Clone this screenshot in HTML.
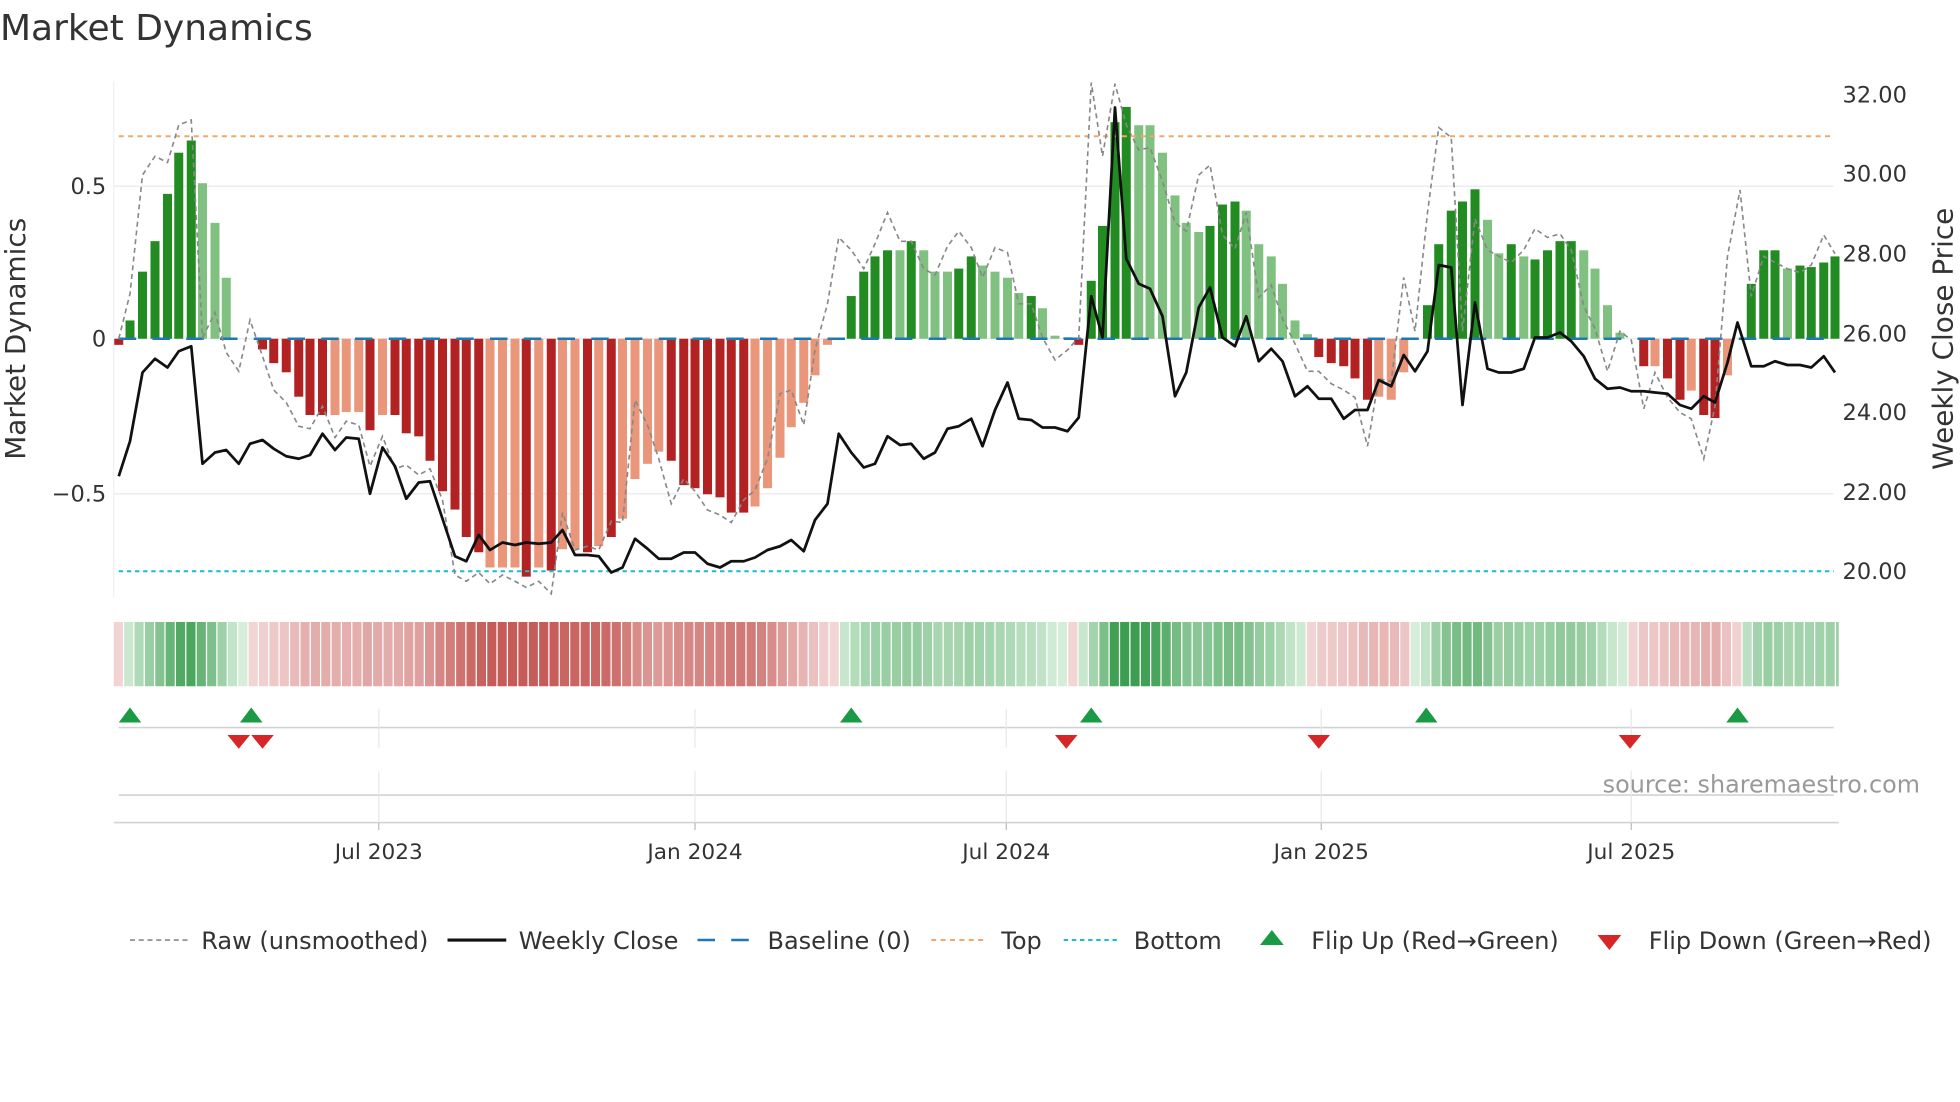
<!DOCTYPE html>
<html><head><meta charset="utf-8"><style>
html,body{margin:0;padding:0;background:#fff;}
svg{display:block;}
text{font-family:"DejaVu Sans","Liberation Sans",sans-serif;}
</style></head><body>
<svg id="s" width="1960" height="1102" viewBox="0 0 1568 881.6" xmlns="http://www.w3.org/2000/svg">
<rect width="1568" height="881.6" fill="#fff"/>
<text x="0" y="32" font-size="28.8" fill="#333">Market Dynamics</text>
<g id="g"></g>
</svg>
<script>
var NS="http://www.w3.org/2000/svg",g=document.getElementById('g');
function el(t,a,txt){var e=document.createElementNS(NS,t);for(var k in a)e.setAttribute(k,a[k]);if(txt!=null)e.textContent=txt;g.appendChild(e);return e;}
el('line',{x1:91,y1:65,x2:91,y2:478,stroke:'#eef0f4','stroke-width':1});
[149,271,395].forEach(function(y){el('line',{x1:91,y1:y,x2:1467,y2:y,stroke:'#ebedf0','stroke-width':1.2});});
var bars=[[95,-0.02,'D'],[104,0.06,'D'],[114,0.22,'D'],[124,0.32,'D'],[134,0.475,'D'],[143,0.61,'D'],[153,0.65,'D'],[162,0.51,'L'],[172,0.38,'L'],[181,0.2,'L'],[191,0,'L'],[200,0,'L'],[210,-0.035,'D'],[219,-0.08,'D'],[229,-0.11,'D'],[239,-0.19,'D'],[248,-0.25,'D'],[258,-0.25,'D'],[268,-0.25,'L'],[277,-0.24,'L'],[287,-0.24,'L'],[296,-0.30,'D'],[306,-0.25,'L'],[316,-0.25,'D'],[325,-0.31,'D'],[335,-0.32,'D'],[344,-0.40,'D'],[354,-0.50,'D'],[364,-0.56,'D'],[373,-0.65,'D'],[383,-0.70,'D'],[392,-0.75,'L'],[402,-0.75,'L'],[412,-0.75,'L'],[421,-0.78,'D'],[431,-0.75,'L'],[441,-0.76,'D'],[450,-0.69,'L'],[460,-0.69,'L'],[470,-0.70,'D'],[479,-0.68,'L'],[489,-0.65,'D'],[498,-0.59,'L'],[508,-0.46,'L'],[518,-0.41,'L'],[527,-0.37,'L'],[537,-0.40,'D'],[547,-0.48,'D'],[556,-0.49,'D'],[566,-0.51,'D'],[576,-0.52,'D'],[585,-0.57,'D'],[595,-0.57,'D'],[604,-0.55,'L'],[614,-0.49,'L'],[624,-0.39,'L'],[633,-0.29,'L'],[643,-0.21,'L'],[652,-0.12,'L'],[662,-0.02,'L'],[671,0,'L'],[681,0.14,'D'],[691,0.22,'D'],[700,0.27,'D'],[710,0.29,'D'],[720,0.29,'L'],[729,0.32,'D'],[739,0.29,'L'],[748,0.22,'L'],[758,0.22,'L'],[767,0.23,'D'],[777,0.27,'D'],[786,0.24,'L'],[796,0.22,'L'],[806,0.2,'L'],[815,0.15,'L'],[825,0.14,'D'],[834,0.10,'L'],[844,0.01,'L'],[854,0.005,'L'],[863,-0.02,'D'],[873,0.19,'D'],[882,0.37,'D'],[892,0.71,'D'],[901,0.76,'D'],[911,0.70,'L'],[920,0.70,'L'],[930,0.61,'L'],[940,0.47,'L'],[949,0.38,'L'],[959,0.35,'L'],[968,0.37,'D'],[978,0.44,'D'],[988,0.45,'D'],[997,0.42,'L'],[1007,0.31,'L'],[1017,0.27,'L'],[1026,0.18,'L'],[1036,0.06,'L'],[1046,0.015,'L'],[1055,-0.06,'D'],[1065,-0.08,'D'],[1075,-0.09,'D'],[1084,-0.13,'D'],[1094,-0.2,'D'],[1103,-0.19,'L'],[1113,-0.2,'L'],[1123,-0.11,'L'],[1132,0,'L'],[1142,0.11,'D'],[1151,0.31,'D'],[1161,0.42,'D'],[1170,0.45,'D'],[1180,0.49,'D'],[1190,0.39,'L'],[1199,0.28,'L'],[1209,0.31,'D'],[1219,0.27,'L'],[1228,0.26,'D'],[1238,0.29,'D'],[1248,0.32,'D'],[1257,0.32,'D'],[1267,0.29,'L'],[1276,0.23,'L'],[1286,0.11,'L'],[1296,0.02,'L'],[1305,0,'L'],[1315,-0.09,'D'],[1324,-0.09,'L'],[1334,-0.13,'D'],[1344,-0.2,'D'],[1353,-0.17,'L'],[1363,-0.25,'D'],[1372,-0.26,'D'],[1382,-0.12,'L'],[1392,0,'L'],[1401,0.18,'D'],[1411,0.29,'D'],[1420,0.29,'D'],[1430,0.23,'L'],[1440,0.24,'D'],[1449,0.235,'D'],[1459,0.25,'D'],[1468,0.27,'D']];
var Y0=271,K=244;
bars.forEach(function(b){if(Math.abs(b[1])<0.004)return;var v=b[1],h=Math.abs(v)*K,y=v>0?Y0-h:Y0;
var c=v>0?(b[2]=='D'?'#228b22':'#80c080'):(b[2]=='D'?'#b22222':'#e9967a');
el('rect',{x:b[0]-3.6,y:y,width:7.2,height:Math.max(h,1.5),fill:c});});
el('line',{x1:95,y1:109,x2:1467,y2:109,stroke:'#f0a868','stroke-width':1.6,'stroke-dasharray':'4 3.5'});
el('line',{x1:95,y1:457,x2:1467,y2:457,stroke:'#17becf','stroke-width':1.6,'stroke-dasharray':'3.5 3'});
el('line',{x1:95,y1:271,x2:1467,y2:271,stroke:'#1f77b4','stroke-width':2,'stroke-dasharray':'14 13'});
var raw="95:271,104:235,114:140,124:125,134:130,143:100,153:96,162:270,172:250,181:282,191:297,200:256,210:285,219:312,229:322,239:341,248:343,258:325,268:350,277:337,287:340,296:373,306:349,316:375,325:372,335:380,344:375,354:400,364:460,373:465,383:458,392:467,402:460,412:465,421:470,431:465,441:475,450:410,460:440,470:437,479:440,489:417,498:418,508:320,518:340,527:367,537:403,547:383,556:393,566:408,576:412,585:418,595:400,604:392,614:367,624:315,633:312,643:340,652:280,662:243,671:190,681:200,691:215,700:195,710:170,720:193,729:193,739:215,748:220,758:197,767:185,777:198,786:222,796:198,806:202,815:243,825:243,834:270,844:288,854:280,863:270,873:66,882:125,892:67,901:100,911:120,920:118,930:145,940:178,949:185,959:140,968:132,978:188,988:199,997:170,1007:238,1017:228,1026:255,1036:275,1046:297,1055:297,1065:307,1075:312,1084:318,1094:357,1103:303,1113:305,1123:222,1132:265,1142:170,1151:102,1161:110,1170:265,1180:175,1190:200,1199:205,1209:210,1219:200,1228:183,1238:190,1248:187,1257:200,1267:245,1276:263,1286:297,1296:265,1305:272,1315:327,1324:298,1334:318,1344:330,1353:335,1363:367,1372:325,1382:205,1392:152,1401:237,1411:205,1420:210,1430:215,1440:218,1449:212,1459:188,1468:203";
var cl="95:381,104:353,114:298,124:287,134:294,143:281,153:277,162:371,172:362,181:360,191:371,200:355,210:352,219:359,229:365,239:367,248:364,258:347,268:360,277:350,287:351,296:395,306:358,316:373,325:399,335:386,344:385,354:415,364:445,373:449,383:428,392:440,402:434,412:436,421:434,431:435,441:434,450:424,460:444,470:444,479:445,489:458,498:454,508:431,518:439,527:447,537:447,547:442,556:442,566:451,576:454,585:449,595:449,604:446,614:440,624:437,633:432,643:441,652:416,662:403,671:347,681:362,691:374,700:371,710:349,720:356,729:355,739:367,748:362,758:343,767:341,777:335,786:357,796:328,806:306,815:335,825:336,834:342,844:342,854:345,863:334,873:237,882:270,892:86,901:207,911:227,920:231,930:253,940:317,949:298,959:246,968:230,978:270,988:277,997:253,1007:289,1017:279,1026:289,1036:317,1046:309,1055:319,1065:319,1075:335,1084:328,1094:328,1103:304,1113:309,1123:284,1132:297,1142:281,1151:212,1161:214,1170:324,1180:242,1190:295,1199:298,1209:298,1219:295,1228:270,1238:270,1248:266,1257:273,1267:285,1276:303,1286:311,1296:310,1305:313,1315:313,1324:314,1334:315,1344:324,1353:327,1363:317,1372:322,1382:290,1390:258,1401:293,1411:293,1420:289,1430:292,1440:292,1449:294,1459:285,1468:298";
function pts(s){return s.split(',').map(function(p){return p.replace(':',',');}).join(' ');}
el('polyline',{points:pts(raw),fill:'none',stroke:'#888','stroke-width':1.3,'stroke-dasharray':'4 3'});
el('polyline',{points:pts(cl),fill:'none',stroke:'#111','stroke-width':2.2,'stroke-linejoin':'round'});
[[149,'0.5'],[271,'0'],[395,'\u22120.5']].forEach(function(t){el('text',{x:85,y:t[0]+6,'font-size':18,fill:'#333','text-anchor':'end'},t[1]);});
[[76,'32.00'],[139,'30.00'],[203,'28.00'],[267,'26.00'],[330,'24.00'],[394,'22.00'],[457,'20.00']].forEach(function(t){el('text',{x:1474,y:t[0]+6,'font-size':18,fill:'#333'},t[1]);});
el('text',{x:0,y:0,'font-size':22.3,fill:'#333','text-anchor':'middle',transform:'translate(20,271) rotate(-90)'},'Market Dynamics');
el('text',{x:0,y:0,'font-size':22.3,fill:'#333','text-anchor':'middle',transform:'translate(1562,271) rotate(-90)'},'Weekly Close Price');
function val(x){for(var i=0;i<bars.length-1;i++){if(x<=bars[i+1][0]){var a=bars[i],b=bars[i+1],t=(x-a[0])/(b[0]-a[0]);return a[1]+(b[1]-a[1])*Math.max(0,Math.min(1,t));}}return bars[bars.length-1][1];}
function mix(c1,c2,t){return 'rgb('+[0,1,2].map(function(i){return Math.round(c1[i]+(c2[i]-c1[i])*t);}).join(',')+')';}
for(var x=91;x<1470;x+=8.3){var v=val(x+4),c;
 if(v>=0){c=mix([214,238,218],[60,158,80],Math.min(1,v/0.72));}else{c=mix([242,214,214],[198,92,88],Math.min(1,-v/0.75));}
 el('rect',{x:x,y:497.6,width:Math.min(7.3,1471-x),height:51.4,fill:c});}
el('line',{x1:95,y1:582,x2:1467,y2:582,stroke:'#d0d2d4','stroke-width':1.3});
el('line',{x1:95,y1:636,x2:1467,y2:636,stroke:'#d0d2d4','stroke-width':1.3});
el('line',{x1:91,y1:658,x2:1471,y2:658,stroke:'#d0d2d4','stroke-width':1.3});
[[303,'Jul 2023'],[556,'Jan 2024'],[805,'Jul 2024'],[1057,'Jan 2025'],[1305,'Jul 2025']].forEach(function(t){
 el('line',{x1:t[0],y1:567,x2:t[0],y2:598,stroke:'#e6e8eb','stroke-width':1});
 el('line',{x1:t[0],y1:617,x2:t[0],y2:658,stroke:'#e6e8eb','stroke-width':1});
 el('line',{x1:t[0],y1:658,x2:t[0],y2:664,stroke:'#bbb','stroke-width':1});
 el('text',{x:t[0],y:687,'font-size':17.3,fill:'#333','text-anchor':'middle'},t[1]);});
[104,201,681,873,1141,1390].forEach(function(x){el('polygon',{points:(x-9)+',578 '+(x+9)+',578 '+x+',566',fill:'#1a9a44'});});
[191,210,853,1055,1304].forEach(function(x){el('polygon',{points:(x-9)+',588 '+(x+9)+',588 '+x+',599',fill:'#d62728'});});
el('text',{x:1536,y:634,'font-size':19.1,fill:'#999','text-anchor':'end'},'source: sharemaestro.com');
var LY=752,FS=19.2;
el('line',{x1:104,y1:LY,x2:150,y2:LY,stroke:'#888','stroke-width':1.3,'stroke-dasharray':'4 3'});
el('text',{x:161,y:LY+7,'font-size':FS,fill:'#333'},'Raw (unsmoothed)');
el('line',{x1:358,y1:LY,x2:405,y2:LY,stroke:'#111','stroke-width':2.5});
el('text',{x:415,y:LY+7,'font-size':FS,fill:'#333'},'Weekly Close');
el('line',{x1:558,y1:LY,x2:604,y2:LY,stroke:'#1f77b4','stroke-width':2,'stroke-dasharray':'14 13'});
el('text',{x:614,y:LY+7,'font-size':FS,fill:'#333'},'Baseline (0)');
el('line',{x1:745,y1:LY,x2:790,y2:LY,stroke:'#f0a868','stroke-width':1.6,'stroke-dasharray':'4 3.5'});
el('text',{x:801,y:LY+7,'font-size':FS,fill:'#333'},'Top');
el('line',{x1:851,y1:LY,x2:896,y2:LY,stroke:'#17becf','stroke-width':1.6,'stroke-dasharray':'3.5 3'});
el('text',{x:907,y:LY+7,'font-size':FS,fill:'#333'},'Bottom');
el('polygon',{points:'1008,756 1027,756 1017.5,744',fill:'#1a9a44'});
el('text',{x:1049,y:LY+7,'font-size':FS,fill:'#333'},'Flip Up (Red\u2192Green)');
el('polygon',{points:'1278,748 1297,748 1287.5,760',fill:'#d62728'});
el('text',{x:1319,y:LY+7,'font-size':FS,fill:'#333'},'Flip Down (Green\u2192Red)');
</script>
</body></html>
